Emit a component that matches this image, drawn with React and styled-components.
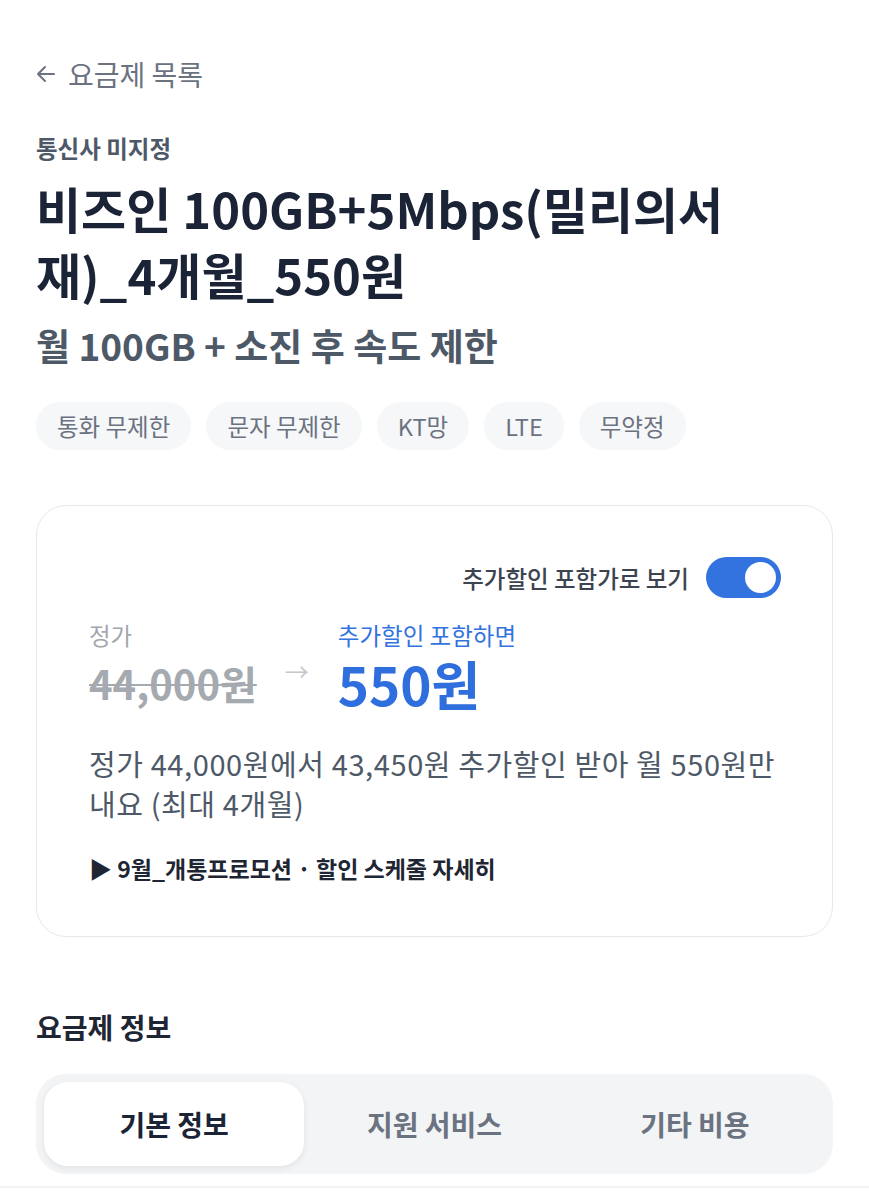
import React from 'react';
import styled, { createGlobalStyle } from 'styled-components';

const GlobalStyle = createGlobalStyle`
  body {
    margin: 0;
    background: #fff;
    font-family: "Noto Sans CJK KR", "Noto Sans", sans-serif;
    color: #191f28;
  }
`;

const Page = styled.main`
  padding: 56px 36px 0;
`;

const BackLink = styled.a`
  display: inline-flex;
  align-items: center;
  gap: 12px;
  font-size: 28px;
  line-height: 36px;
  color: #6b7280;
  text-decoration: none;
`;

const Carrier = styled.div`
  margin-top: 41px;
  font-size: 23.5px;
  line-height: 30px;
  font-weight: 700;
  color: #4e5968;
`;

const Title = styled.h1`
  margin: 12px 0 0;
  font-size: 49px;
  line-height: 66px;
  font-weight: 700;
  color: #1b2436;
`;

const Subtitle = styled.h2`
  margin: 16px 0 0;
  font-size: 37px;
  line-height: 44px;
  font-weight: 700;
  color: #4e5968;
`;

const Tags = styled.div`
  display: flex;
  gap: 15px;
  margin-top: 35px;
`;

const Tag = styled.span`
  height: 48px;
  padding: 0 21px;
  display: flex;
  align-items: center;
  border-radius: 24px;
  background: #f6f7f9;
  font-size: 23.5px;
  color: #6b7280;
`;

const Card = styled.section`
  margin-top: 55px;
  border: 1px solid #e6e8eb;
  border-radius: 30px;
  padding: 51px 51px 53px 52px;
`;

const ToggleRow = styled.div`
  display: flex;
  justify-content: flex-end;
  align-items: center;
  gap: 17px;
  font-size: 23.5px;
  font-weight: 500;
  color: #3d4450;
`;

const Switch = styled.span`
  width: 75px;
  height: 41px;
  border-radius: 21px;
  background: ${({ on }) => (on ? '#3273e0' : '#d1d6db')};
  display: flex;
  align-items: center;
  justify-content: ${({ on }) => (on ? 'flex-end' : 'flex-start')};
  padding: 0 5px;
  box-sizing: border-box;

  &::after {
    content: '';
    width: 31px;
    height: 31px;
    border-radius: 50%;
    background: #fff;
  }
`;

const PriceRow = styled.div`
  display: flex;
  align-items: flex-start;
  margin-top: 22px;
`;

const PriceCol = styled.div`
  display: flex;
  flex-direction: column;
`;

const PriceLabel = styled.span`
  font-size: 23.5px;
  line-height: 30px;
  color: ${({ accent }) => (accent ? '#3273e0' : '#a2a7ae')};
`;

const OldPrice = styled.span`
  margin-top: 7px;
  font-size: 40px;
  line-height: 52px;
  font-weight: 700;
  color: #a5a9b0;
  text-decoration: line-through;
  text-decoration-thickness: 2px;
`;

const NewPrice = styled.span`
  margin-top: 3px;
  font-size: 53px;
  line-height: 60px;
  font-weight: 700;
  color: #2f6edd;
`;

const Arrow = styled.span`
  margin: 37px 29px 0 28px;
  font-size: 24px;
  line-height: 28px;
  color: #c4c8ce;
`;

const Description = styled.p`
  margin: 30px 0 0;
  font-size: 29px;
  line-height: 40px;
  letter-spacing: 0.6px;
  color: #4e5968;
`;

const DetailLink = styled.div`
  margin-top: 30px;
  font-size: 23px;
  line-height: 30px;
  font-weight: 700;
  color: #1f2633;
`;

const SectionTitle = styled.h3`
  margin: 72px 0 0;
  font-size: 28px;
  line-height: 36px;
  font-weight: 700;
  color: #1f2633;
`;

const TabBar = styled.div`
  margin-top: 29px;
  padding: 8px;
  border-radius: 30px;
  background: #f2f4f6;
  display: grid;
  grid-template-columns: repeat(3, 1fr);
`;

const Tab = styled.button`
  height: 84px;
  border: 0;
  border-radius: 24px;
  background: ${({ active }) => (active ? '#fff' : 'transparent')};
  box-shadow: ${({ active }) => (active ? '0 2px 6px rgba(0,0,0,0.08)' : 'none')};
  font-family: inherit;
  font-size: 28px;
  font-weight: 700;
  color: ${({ active }) => (active ? '#1b2436' : '#6b7280')};
`;

const Divider = styled.div`
  margin-top: 12px;
  border-top: 2px solid #f2f4f6;
`;

const tags = ['통화 무제한', '문자 무제한', 'KT망', 'LTE', '무약정'];
const tabs = ['기본 정보', '지원 서비스', '기타 비용'];

export default function App () {
  return (
    <>
      <GlobalStyle />
      <Page>
        <BackLink href='#'>
          <svg width='20' height='20' viewBox='0 0 20 20' fill='none' stroke='#6b7280' strokeWidth='2' strokeLinecap='round' strokeLinejoin='round'>
            <path d='M18 10H2M9 3l-7 7 7 7' />
          </svg>
          요금제 목록
        </BackLink>
        <Carrier>통신사 미지정</Carrier>
        <Title>비즈인 100GB+5Mbps(밀리의서재)_4개월_550원</Title>
        <Subtitle>월 100GB + 소진 후 속도 제한</Subtitle>
        <Tags>
          {tags.map((t) => <Tag key={t}>{t}</Tag>)}
        </Tags>

        <Card>
          <ToggleRow>
            추가할인 포함가로 보기
            <Switch on />
          </ToggleRow>
          <PriceRow>
            <PriceCol>
              <PriceLabel>정가</PriceLabel>
              <OldPrice>44,000원</OldPrice>
            </PriceCol>
            <Arrow>→</Arrow>
            <PriceCol>
              <PriceLabel accent>추가할인 포함하면</PriceLabel>
              <NewPrice>550원</NewPrice>
            </PriceCol>
          </PriceRow>
          <Description>
            정가 44,000원에서 43,450원 추가할인 받아 월 550원만 내요 (최대 4개월)
          </Description>
          <DetailLink>▶ 9월_개통프로모션 · 할인 스케줄 자세히</DetailLink>
        </Card>

        <SectionTitle>요금제 정보</SectionTitle>
        <TabBar>
          {tabs.map((t, i) => <Tab key={t} active={i === 0}>{t}</Tab>)}
        </TabBar>
      </Page>
      <Divider />
    </>
  );
}
